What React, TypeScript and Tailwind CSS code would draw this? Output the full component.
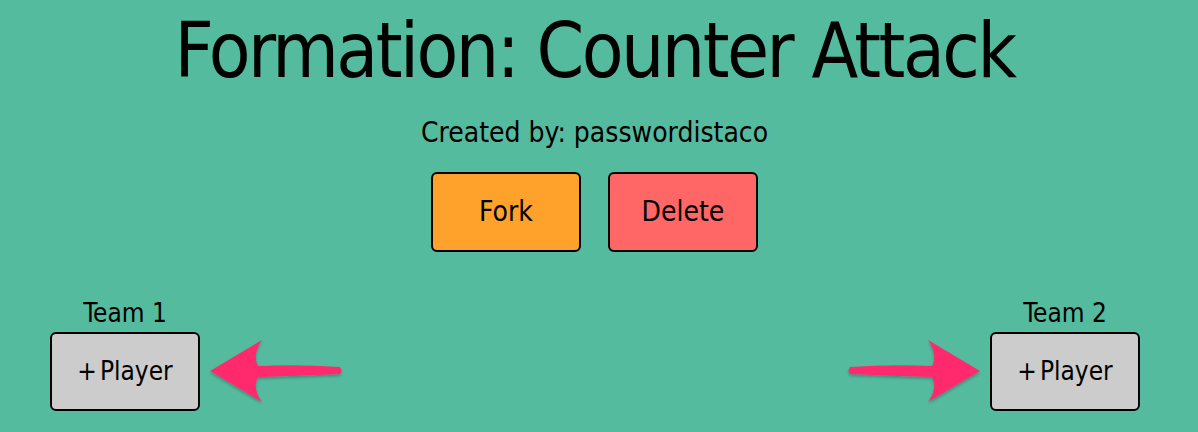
const font = { fontFamily: '"DejaVu Sans Condensed", "Liberation Sans", sans-serif' };

function Arrow({ dir }: { dir: 'left' | 'right' }) {
  return (
    <svg width="140" height="80" viewBox="0 0 140 80" className={dir === 'right' ? '-scale-x-100' : ''}>
      <defs>
        <filter id={`sh-${dir}`} x="-20%" y="-20%" width="140%" height="140%">
          <feDropShadow dx="0" dy="2" stdDeviation="1.5" floodColor="#000" floodOpacity="0.25" />
        </filter>
      </defs>
      <path
        d="M4 40 L56 9 Q46 24 52 35 Q92 33 134 36 Q137 40 134 43 Q92 45 52 46 Q46 57 56 71 Z"
        fill="#fe2c6d"
        filter={`url(#sh-${dir})`}
      />
    </svg>
  );
}

function TeamColumn({ name }: { name: string }) {
  return (
    <div className="flex flex-col items-center">
      <div className="text-[26px] leading-[30px] text-black mb-[4px]">{name}</div>
      <button className="w-[150px] h-[79px] bg-[#cccccc] border-2 border-black rounded-[6px] text-[26px] text-black flex items-center justify-center gap-[3px]">
        <span>+</span>
        <span>Player</span>
      </button>
    </div>
  );
}

export default function App() {
  return (
    <div className="w-[1198px] h-[432px] bg-[#55bb9f] overflow-hidden" style={font}>
      <div className="pr-[9px]">
        <h1 className="text-center text-[76px] leading-[96px] tracking-[-2.5px] pt-[3px] text-black">Formation: Counter Attack</h1>
        <p className="text-center text-[28px] leading-[32px] mt-[18px] text-black">Created by: passwordistaco</p>
        <div className="flex justify-center gap-[27px] mt-[23px]">
          <button className="w-[150px] h-[80px] bg-[#ffa22b] border-2 border-black rounded-[6px] text-[28px] text-black">Fork</button>
          <button className="w-[150px] h-[80px] bg-[#ff6666] border-2 border-black rounded-[6px] text-[28px] text-black">Delete</button>
        </div>
      </div>
      <div className="flex justify-between items-end pl-[50px] pr-[58px] mt-[46px]">
        <div className="flex items-end gap-[6px]">
          <TeamColumn name="Team 1" />
          <Arrow dir="left" />
        </div>
        <div className="flex items-end gap-[6px]">
          <Arrow dir="right" />
          <TeamColumn name="Team 2" />
        </div>
      </div>
    </div>
  );
}
